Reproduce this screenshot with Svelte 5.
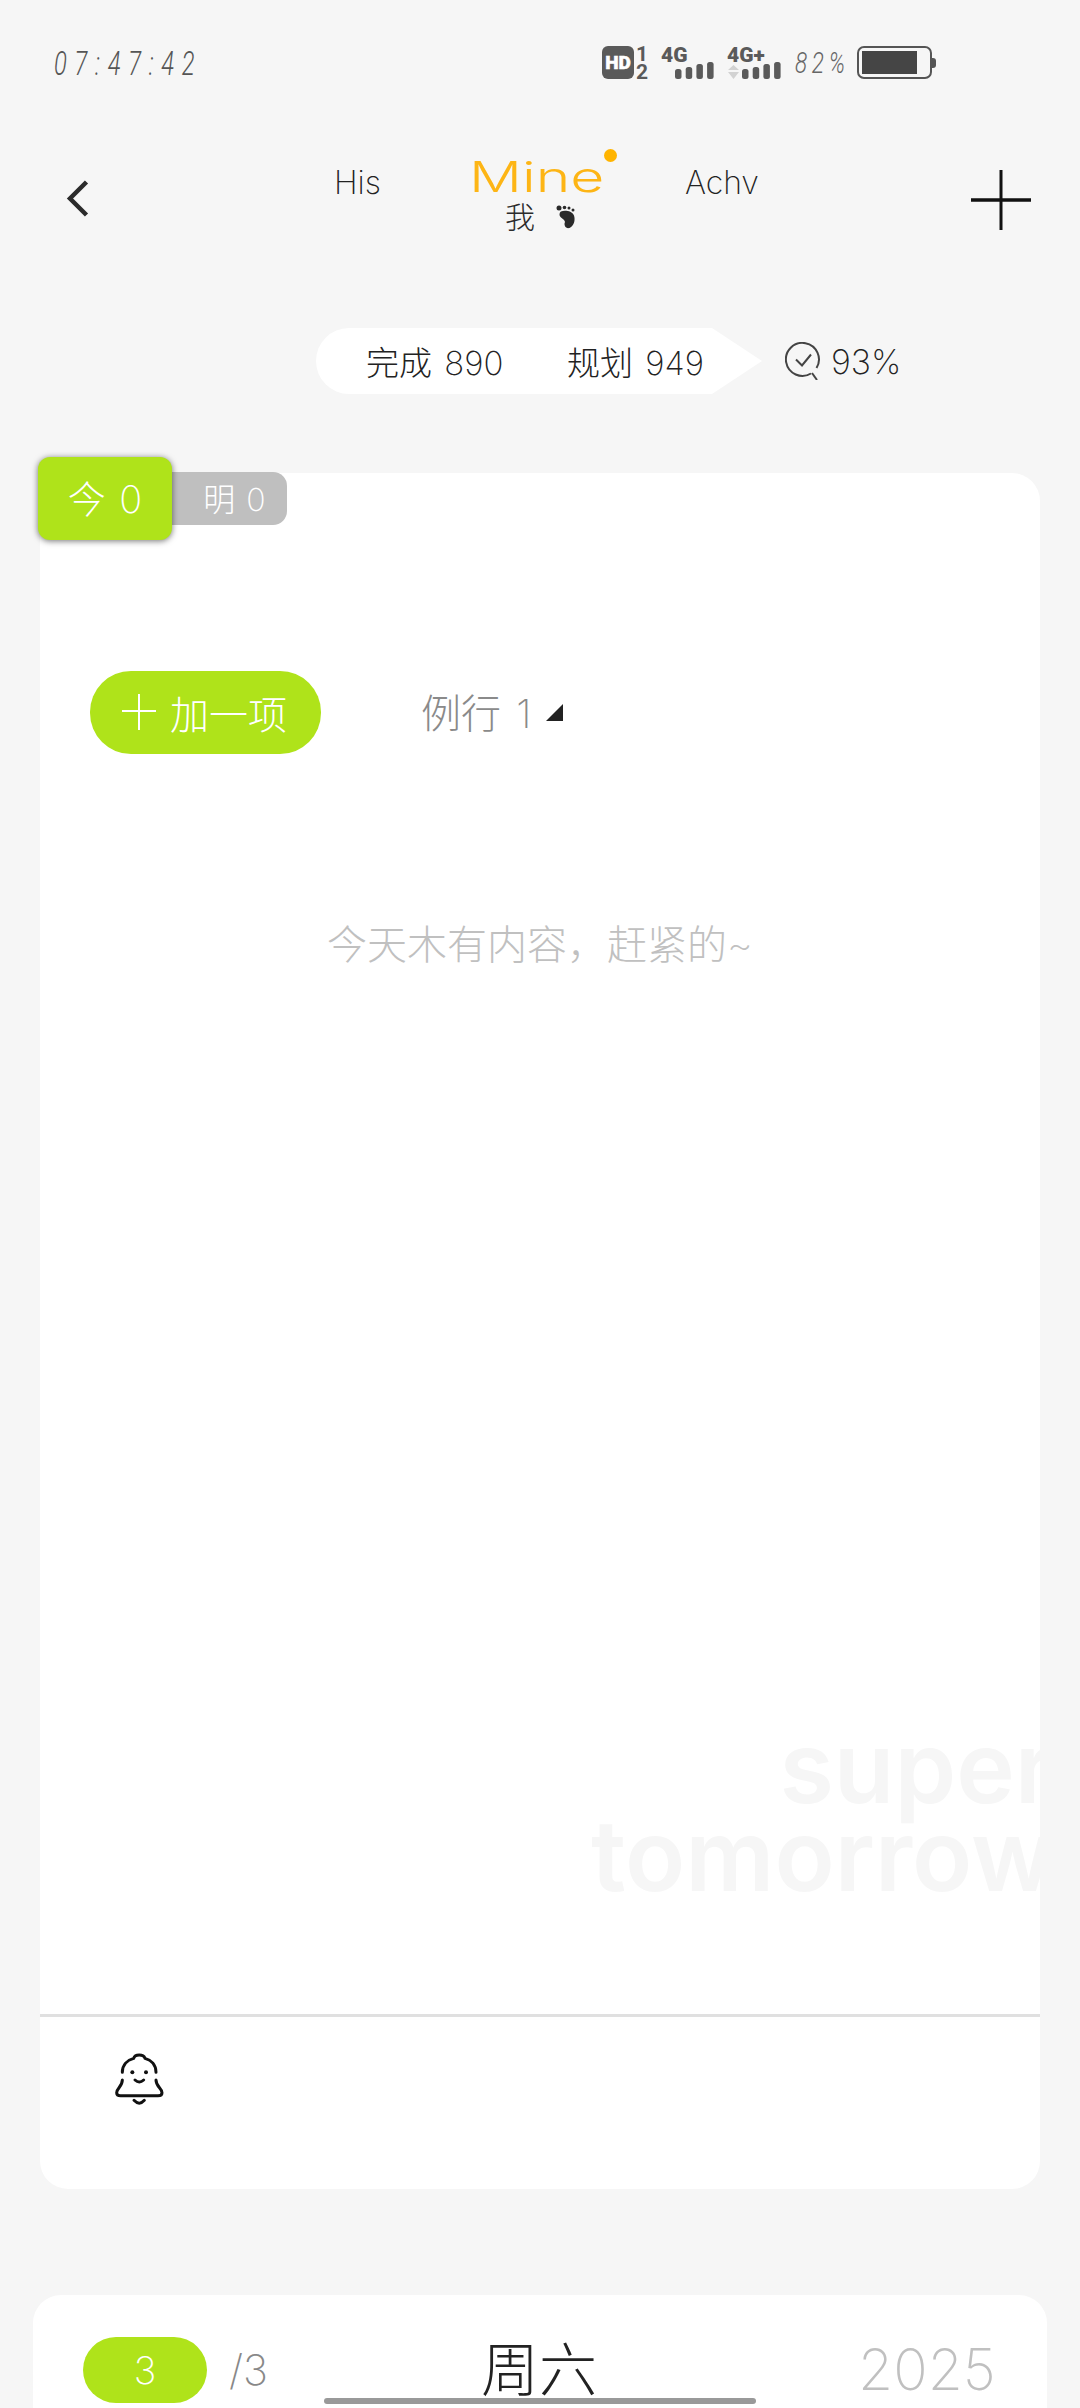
<script>
  const heights = [10, 12, 15, 17];
</script>

<div class="page">
  <header class="status">
    <span class="time">07:47:42</span>
    <div class="sys">
      <svg class="sys-net" width="182" height="46" viewBox="0 -6 182 46">
        <rect x="0" y="0" width="32" height="33" rx="6" fill="#5a5a5a" />
        <text x="16" y="23" text-anchor="middle" class="hd">HD</text>
        <text x="40" y="15" text-anchor="middle" class="sim">1</text>
        <text x="40" y="33" text-anchor="middle" class="sim">2</text>
        <text x="59" y="16" class="g">4G</text>
        {#each heights as h, i}
          <rect x={73 + i * 10.700} y={33 - h} width="6.500" height={h} rx="2.500" fill="#5a5a5a" />
        {/each}
        <text x="125" y="16" class="g">4G+</text>
        <path d="M126 24l5.500-5 5.500 5zM126 26l5.500 7 5.500-7z" fill="#d2d2d2" />
        {#each heights as h, i}
          <rect x={140 + i * 10.700} y={33 - h} width="6.500" height={h} rx="2.500" fill="#5a5a5a" />
        {/each}
      </svg>
      <span class="batt-text">82%</span>
      <svg class="batt" width="80" height="34" viewBox="0 0 80 34">
        <rect x="1" y="1" width="73" height="31" rx="6" fill="none" stroke="#555" stroke-width="2" />
        <rect x="5" y="5" width="55" height="23" fill="#454545" />
        <path d="M75 12h1a3 3 0 0 1 3 3v4a3 3 0 0 1-3 3h-1z" fill="#555" />
      </svg>
    </div>
  </header>

  <nav class="nav">
    <svg class="back" width="24" height="37" viewBox="0 0 24 37">
      <path d="M21.500 2L5 18.500 21.500 35" fill="none" stroke="#2b2b2b" stroke-width="4.500" />
    </svg>
    <span class="tab his">His</span>
    <div class="mine">
      <span class="mine-word">Mine</span>
      <i class="mine-dot"></i>
      <div class="mine-sub">
        <span>我</span>
        <svg width="20" height="24" viewBox="0 0 20 24">
          <circle cx="3" cy="3" r="2.500" fill="#2a2a2a" />
          <circle cx="8.500" cy="2.500" r="1.800" fill="#2a2a2a" />
          <circle cx="13" cy="3" r="1.500" fill="#2a2a2a" />
          <circle cx="17" cy="5" r="1.500" fill="#2a2a2a" />
          <path d="M5 6.500C9 5 16 6 18 10.500 19.500 15 18 21 13.500 23 9.500 24 7.500 20 9 17 8.500 14 4 13 3.500 10 3.500 8 4 7 5 6.500z" fill="#2a2a2a" />
        </svg>
      </div>
    </div>
    <span class="tab achv">Achv</span>
    <svg class="plus" width="60" height="60" viewBox="0 0 60 60">
      <path d="M30 0V60" stroke="#111" stroke-width="3" />
      <path d="M0 30H60" stroke="#111" stroke-width="3.500" />
    </svg>
  </nav>

  <section class="summary">
    <div class="pill">
      <span class="stat first">完成 890</span>
      <span class="stat">规划 949</span>
    </div>
    <svg class="rate-icon" width="38" height="38" viewBox="0 0 38 38">
      <path d="M26 31.500A16.500 16.500 0 1 1 31.500 26" fill="none" stroke="#444" stroke-width="2" />
      <path d="M27 31l5 7" fill="none" stroke="#444" stroke-width="2" />
      <path d="M11 17.500l6 6 9-11" fill="none" stroke="#444" stroke-width="2" />
    </svg>
    <span class="rate">93%</span>
  </section>

  <main class="card">
    <div class="day-tabs">
      <div class="day today">今 0</div>
      <div class="day next">明 0</div>
    </div>
    <div class="card-body">
      <div class="actions">
        <div class="add">
          <svg width="34" height="36" viewBox="0 0 34 36">
            <path d="M17 0V36M0 17H34" stroke="#fff" stroke-width="2" fill="none" />
          </svg>
          <span>加一项</span>
        </div>
        <div class="routine">
          <span>例行 1</span>
          <i class="corner"></i>
        </div>
      </div>
      <p class="empty">今天木有内容，赶紧的~</p>
      <div class="watermark">super<br />tomorrow</div>
    </div>
    <footer class="card-foot">
      <svg class="bell" width="100" height="90" viewBox="0 0 300 270">
        <g fill="none" stroke="#111" stroke-width="9" stroke-linecap="round">
          <path d="M97 127C97 105 112 90 131 85C135 72 160 72 165 85C184 90 198 105 198 127" />
          <path d="M97 150C97 170 80 175 80 188C80 194 84 197 92 197H204C212 197 216 194 216 188C216 175 198 170 198 150" />
          <path d="M135 150Q148 162 161 150" />
          <path d="M132 211Q148 228 163 211" />
        </g>
        <circle cx="127" cy="127" r="6" fill="#111" />
        <circle cx="168" cy="127" r="6" fill="#111" />
      </svg>
    </footer>
  </main>

  <section class="next-card">
    <div class="count">3</div>
    <span class="total">/3</span>
    <span class="weekday">周六</span>
    <span class="year">2025</span>
  </section>

  <div class="home-bar"></div>
</div>

<style>
  :global(body) {
    margin: 0;
    background: #f6f6f6;
  }
  .page {
    position: relative;
    width: 1080px;
    height: 2408px;
    overflow: hidden;
    background: #f6f6f6;
    font-family: "Inter", "Noto Sans CJK SC", sans-serif;
    font-weight: 200;
    color: #2b2b2b;
  }
  .status {
    display: flex;
    align-items: center;
    justify-content: space-between;
    height: 34px;
    padding: 46px 143px 0 54px;
  }
  .time {
    font-family: "Roboto", sans-serif;
    font-weight: 300;
    font-style: italic;
    font-size: 34px;
    letter-spacing: 11px;
    color: #555;
    transform: scaleX(0.7);
    transform-origin: left center;
  }
  .sys {
    display: flex;
    align-items: center;
  }
  .sys-net {
    display: block;
    margin: -6px 0;
  }
  .hd {
    font: 900 19px "Roboto", sans-serif;
    fill: #fff;
    stroke: #fff;
    stroke-width: 0.500px;
  }
  .sim {
    font: 700 21px "Roboto", sans-serif;
    fill: #5a5a5a;
  }
  .g {
    font: 900 21px "Roboto", sans-serif;
    fill: #5a5a5a;
  }
  .batt-text {
    width: 62px;
    margin-left: 11px;
    font-family: "Roboto", sans-serif;
    font-weight: 300;
    font-style: italic;
    font-size: 29px;
    letter-spacing: 6px;
    color: #666;
    transform: scaleX(0.78);
    transform-origin: left center;
  }
  .batt {
    display: block;
  }
  .nav {
    position: relative;
    display: flex;
    align-items: flex-start;
    height: 80px;
    margin-top: 70px;
    padding-left: 65px;
  }
  .back {
    margin-top: 30px;
  }
  .tab {
    margin-top: 13px;
    font-size: 32px;
    line-height: 40px;
    color: #222;
  }
  .his {
    margin-left: 245px;
  }
  .mine {
    position: relative;
    width: 130px;
    margin-left: 88px;
  }
  .mine-word {
    display: block;
    margin-top: 5px;
    font-size: 42px;
    font-weight: 300;
    line-height: 44px;
    color: #fdb515;
    transform: scaleX(1.4);
    transform-origin: left center;
  }
  .mine-dot {
    position: absolute;
    left: 135px;
    top: -1px;
    width: 13px;
    height: 13px;
    border-radius: 50%;
    background: #ffb400;
  }
  .mine-sub {
    display: flex;
    align-items: center;
    gap: 21px;
    margin-top: 0;
    padding-left: 36px;
    font-size: 30px;
    line-height: 36px;
  }
  .achv {
    margin-left: 86px;
  }
  .plus {
    position: absolute;
    left: 971px;
    top: 20px;
  }
  .summary {
    display: flex;
    align-items: center;
    height: 66px;
    margin-top: 98px;
    padding-left: 316px;
  }
  .pill {
    display: flex;
    align-items: center;
    box-sizing: border-box;
    width: 446px;
    height: 66px;
    padding-left: 50px;
    background: #fff;
    border-radius: 33px 0 0 33px;
    clip-path: polygon(0 0, 396px 0, 100% 50%, 396px 100%, 0 100%);
  }
  .stat {
    font-size: 33px;
    word-spacing: 3px;
    color: #222;
  }
  .stat.first {
    width: 201px;
  }
  .rate-icon {
    margin-left: 23px;
  }
  .rate {
    margin-left: 8px;
    font-size: 34px;
    color: #222;
  }
  .card {
    position: relative;
    display: flex;
    flex-direction: column;
    height: 1716px;
    margin: 79px 40px 0;
    background: #fff;
    border-radius: 28px;
  }
  .day-tabs {
    position: absolute;
    left: -2px;
    top: -16px;
    display: flex;
    align-items: flex-start;
  }
  .day {
    display: flex;
    align-items: center;
    justify-content: center;
  }
  .today {
    position: relative;
    z-index: 1;
    box-sizing: border-box;
    width: 134px;
    height: 83px;
    padding-bottom: 4px;
    border-radius: 12px;
    background: #afe31a;
    box-shadow: 0 1px 6px rgba(0, 0, 0, 0.55);
    color: #fff;
    font-size: 38px;
    word-spacing: 3px;
  }
  .next {
    width: 115px;
    height: 53px;
    margin-top: 15px;
    padding: 0 0 4px 10px;
    box-sizing: border-box;
    border-radius: 0 14px 14px 0;
    background: #bfbfbf;
    color: #fff;
    font-size: 32px;
    word-spacing: 2px;
  }
  .card-body {
    position: relative;
    flex: 1;
    overflow: hidden;
    border-radius: 28px 28px 0 0;
    border-bottom: 3px solid #e0e0e0;
  }
  .actions {
    display: flex;
    align-items: center;
    height: 83px;
    margin-top: 198px;
    padding-left: 50px;
  }
  .add {
    display: flex;
    align-items: center;
    box-sizing: border-box;
    width: 231px;
    height: 83px;
    padding: 0 0 2px 32px;
    gap: 14px;
    border-radius: 41px;
    background: #afe31a;
    color: #fff;
    font-size: 39px;
  }
  .routine {
    position: relative;
    margin-left: 100px;
    width: 142px;
    padding-bottom: 3px;
    font-size: 40px;
    word-spacing: 4px;
    color: #8a8a8a;
  }
  .corner {
    position: absolute;
    left: 125px;
    top: 22px;
    width: 0;
    height: 0;
    border-left: 17px solid transparent;
    border-bottom: 17px solid #222;
  }
  .empty {
    margin: 161px 0 0;
    text-align: center;
    font-size: 40px;
    line-height: 60px;
    color: #c0c0c0;
  }
  .watermark {
    position: absolute;
    right: -14px;
    top: 1250px;
    font-family: "Inter", sans-serif;
    font-weight: 600;
    font-size: 99px;
    line-height: 88px;
    text-align: right;
    color: #f6f6f6;
  }
  .card-foot {
    box-sizing: border-box;
    height: 172px;
    padding: 13px 0 0 50px;
  }
  .bell {
    display: block;
  }
  .next-card {
    display: flex;
    align-items: flex-start;
    box-sizing: border-box;
    height: 200px;
    margin: 106px 33px 0;
    padding-top: 42px;
    background: #fff;
    border-radius: 28px;
  }
  .count {
    width: 124px;
    height: 66px;
    margin-left: 50px;
    border-radius: 33px;
    background: #afe31a;
    color: #fff;
    font-size: 38px;
    line-height: 66px;
    text-align: center;
  }
  .total {
    margin-left: 22px;
    font-size: 42px;
    line-height: 66px;
    color: #888;
  }
  .weekday {
    margin-left: 213px;
    font-size: 58px;
    line-height: 66px;
    color: #222;
  }
  .year {
    margin-left: 261px;
    font-size: 57px;
    line-height: 66px;
    color: #c0c0c0;
  }
  .home-bar {
    position: absolute;
    left: 324px;
    top: 2398px;
    width: 432px;
    height: 6px;
    border-radius: 3px;
    background: #999;
  }
</style>
